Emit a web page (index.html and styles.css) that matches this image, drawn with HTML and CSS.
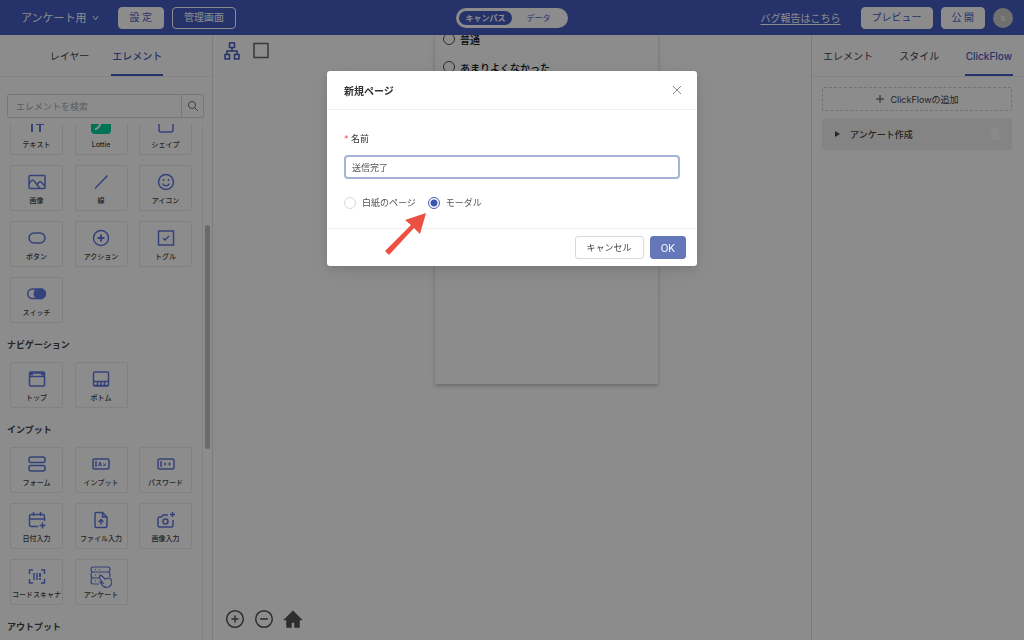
FILE: index.html
```html
<!DOCTYPE html>
<html lang="ja">
<head>
    <meta charset="UTF-8">
    <meta name="viewport" content="width=device-width, initial-scale=1.0">
    <title>アンケート用</title>
    <link rel="stylesheet" href="styles.css">
</head>
<body>

    <!-- Header -->
    <header class="header">
        <div class="header-left">
            <button class="project">アンケート用
                <svg width="7" height="6" viewBox="0 0 7 6"><path d="M1 1l2.500 4L6 1"/></svg>
            </button>
            <button class="btn-head">設 定</button>
            <button class="btn-head outline">管理画面</button>
        </div>
        <div class="switch">
            <button class="active">キャンパス</button>
            <button>データ</button>
        </div>
        <div class="header-right">
            <a class="bug-link" href="#">バグ報告はこちら</a>
            <button class="btn-head narrow">プレビュー</button>
            <button class="btn-head narrow">公 開</button>
            <span class="avatar">s</span>
        </div>
    </header>

    <div class="workspace">

        <!-- Element palette -->
        <aside class="palette">
            <nav class="tabs tabs-left">
                <button>レイヤー</button>
                <button class="active">エレメント</button>
            </nav>
            <form class="search">
                <input type="text" placeholder="エレメントを検索" aria-label="エレメントを検索">
                <button type="button" aria-label="検索">
                    <svg width="12" height="12" viewBox="0 0 12 12"><circle cx="5" cy="5" r="3.500"/><path d="M7.600 7.600L11 11"/></svg>
                </button>
            </form>
            <div class="scroll">
                <div class="scroll-content">
                    <div class="cards">
                        <button class="card"><svg viewBox="0 0 20 20"><path d="M5 7v9M9 8h8M13 8v8" stroke-width="2"/></svg>テキスト</button>
                        <button class="card"><svg viewBox="0 0 20 20"><rect class="lottie" x="0" y="0" width="20" height="18" rx="4"/><path class="lottie-line" d="M4 13c6 0 4-9 10-9"/></svg>Lottie</button>
                        <button class="card"><svg viewBox="0 0 20 20"><rect x="3" y="2" width="14" height="14" rx="2"/></svg>シェイプ</button>
                        <button class="card"><svg viewBox="0 0 20 20"><rect x="2" y="3.500" width="16" height="13" rx="1"/><path d="M2 12c2-4 4-5 6-2l4.500 6M10 13c2-4 4-4 5-2l3 3"/></svg>画像</button>
                        <button class="card"><svg viewBox="0 0 20 20"><path d="M4 16.500L16.500 3.500"/></svg>線</button>
                        <button class="card"><svg viewBox="0 0 20 20"><circle cx="10" cy="10" r="7.500"/><path d="M6.500 11.500c1.500 3 5.500 3 7 0M7.500 7v2M12.500 7v2"/></svg>アイコン</button>
                        <button class="card"><svg viewBox="0 0 20 20"><rect x="2" y="5" width="16" height="10" rx="5"/></svg>ボタン</button>
                        <button class="card"><svg viewBox="0 0 20 20"><circle cx="10" cy="10" r="7.500"/><path d="M10 6.500v7M6.500 10h7" stroke-width="2"/></svg>アクション</button>
                        <button class="card"><svg viewBox="0 0 20 20"><rect x="2.500" y="3" width="15" height="14"/><path d="M7 10l2 2 4-4"/></svg>トグル</button>
                        <button class="card"><svg viewBox="0 0 20 20"><path d="M12 5H5.500a4.500 4.500 0 0 0 0 9.500H12M9 5.500c-2 2.500-2 6 0 8.500"/><circle class="fill" cx="13.500" cy="9.700" r="5"/></svg>スイッチ</button>
                    </div>
                    <h2>ナビゲーション</h2>
                    <div class="cards">
                        <button class="card"><svg viewBox="0 0 20 20"><rect x="2.500" y="3" width="15" height="14" rx="1"/><path d="M3 4h14M3 5.500h3M14 5.500h3M2.500 7.500h15"/></svg>トップ</button>
                        <button class="card"><svg viewBox="0 0 20 20"><rect x="2.500" y="3" width="15" height="14" rx="1"/><path d="M2.500 12.500h15M6.500 16v-3M10 16v-3M13.500 16v-3M3 16.500h14"/></svg>ボトム</button>
                    </div>
                    <h2>インプット</h2>
                    <div class="cards">
                        <button class="card"><svg viewBox="0 0 20 20"><rect x="2" y="3" width="16" height="5.500" rx="2"/><rect x="2" y="11.500" width="16" height="5.500" rx="2"/></svg>フォーム</button>
                        <button class="card"><svg viewBox="0 0 20 20"><rect x="2" y="5" width="16" height="10" rx="1.500"/><path d="M5 7v6"/><path d="M7.500 12L9 8l1.500 4M8 11h2M12.500 9.500l2 2.500M14.500 9.500l-2 2.500" stroke-width="1"/></svg>インプット</button>
                        <button class="card"><svg viewBox="0 0 20 20"><rect x="2" y="5" width="16" height="10" rx="1.500"/><path d="M5 7v6"/><path d="M7.500 10h3M9 8.500v3M12 10h3M13.500 8.500v3" stroke-width="1"/></svg>パスワード</button>
                        <button class="card"><svg viewBox="0 0 20 20"><path d="M11 16.500H4.500q-2 0-2-2v-8q0-2 2-2h11q2 0 2 2V11M2.500 9h15M6.500 2v4M13.500 2v4M15.500 12.500v6M12.500 15.500h6"/></svg>日付入力</button>
                        <button class="card"><svg viewBox="0 0 20 20"><path d="M11.500 2.500h-6q-1.500 0-1.500 1.500v12q0 1.500 1.500 1.500h9q1.500 0 1.500-1.500V7zM11.500 3v4H16M10 14.500V9.500M7.500 12L10 9.500l2.500 2.500"/></svg>ファイル入力</button>
                        <button class="card"><svg viewBox="0 0 20 20"><path d="M12 5H7L5.500 7H3.500Q2 7 2 8.500v7Q2 17 3.500 17h12q1.500 0 1.500-1.500V10M16.500 2v5M14 4.500h5"/><circle cx="9.500" cy="11.500" r="2.500"/></svg>画像入力</button>
                        <button class="card"><svg viewBox="0 0 20 20"><path d="M6 4H2.500v4M14 4h3.500v4M6 17H2.500v-4M14 17h3.500v-4M7 7v7M10 7v7"/><path d="M13 7v4M13 12v2" stroke-width="2"/></svg>コードスキャナ</button>
                        <button class="card"><svg class="large" viewBox="0 0 22 22"><path d="M3 1h15q2 0 2 2.500T18 6H3Q1 6 1 3.500T3 1zM18 6q2 0 2 3v2M3 6Q1 6 1 9t2 3h7M3 12q-2 0-2 3t2 3h6M5 3.500h1M9 3.500h1M5 9h1M9 9h1M5 15h1"/><path d="M10 10q1-1 2 0l3 3 3-1q3 0 4 3 0 4-3 6-4 1-6-1l-3-4 3 1-3-4q-1-2 0-3z"/></svg>アンケート</button>
                    </div>
                    <h2>アウトプット</h2>
                </div>
                <span class="scroll-thumb"></span>
            </div>
        </aside>

        <!-- Canvas -->
        <main class="canvas">
            <div class="tools">
                <button class="tree" aria-label="ページ構成">
                    <svg width="18" height="20" viewBox="0 0 18 20"><path d="M6.500 2h5v4.500h-5zM2 13.500h4.500V18H2zM11.500 13.500H16V18h-4.500zM9 7v3M4 13.500V10h10v3.500"/></svg>
                </button>
                <button aria-label="ページ">
                    <svg width="18" height="20" viewBox="0 0 18 20"><path d="M2 2.500h14v14H2z"/></svg>
                </button>
            </div>
            <div class="stage">
                <div class="screen">
                    <label class="option"><input type="radio" name="rating">普通</label>
                    <label class="option"><input type="radio" name="rating">あまりよくなかった</label>
                </div>
            </div>
            <div class="zoom">
                <button aria-label="拡大">
                    <svg width="20" height="20" viewBox="0 0 20 20"><circle cx="10" cy="10" r="8.300"/><path d="M10 6.500v7M6.500 10h7"/></svg>
                </button>
                <button aria-label="縮小">
                    <svg width="20" height="20" viewBox="0 0 20 20"><circle cx="10" cy="10" r="8.300"/><path d="M6 10h8"/></svg>
                </button>
                <button aria-label="ホーム">
                    <svg width="20" height="20" viewBox="0 0 20 20"><path class="home" d="M10 2.500L2 10.500h2V18h4v-5h4v5h4v-7.500h2z"/></svg>
                </button>
            </div>
        </main>

        <!-- ClickFlow panel -->
        <aside class="inspector">
            <nav class="tabs tabs-right">
                <button>エレメント</button>
                <button>スタイル</button>
                <button class="active">ClickFlow</button>
            </nav>
            <div class="flows">
                <button class="add-flow">
                    <svg width="10" height="10" viewBox="0 0 10 10"><path d="M5 1v8M1 5h8"/></svg>
                    ClickFlowの追加
                </button>
                <div class="flow">
                    <svg width="5" height="6" viewBox="0 0 5 6"><path d="M0 0l5 3-5 3z"/></svg>
                    <span>アンケート作成</span>
                    <button aria-label="削除">
                        <svg width="10" height="12" viewBox="0 0 10 12"><path d="M0 1h3V0h4v1h3v2H0zM1 3h8v9H1z"/></svg>
                    </button>
                </div>
            </div>
        </aside>
    </div>

    <!-- New page modal -->
    <div class="mask">
        <form class="modal" role="dialog" aria-labelledby="modal-title">
            <div class="modal-header">
                <h1 id="modal-title">新規ページ</h1>
                <button type="button" class="close" aria-label="閉じる">
                    <svg width="10" height="10" viewBox="0 0 10 10"><path d="M1 1l8 8M9 1L1 9"/></svg>
                </button>
            </div>
            <div class="modal-body">
                <label class="field-label" for="page-name"><span>*</span> 名前</label>
                <input class="field" id="page-name" type="text" value="送信完了">
                <div class="radios">
                    <label><input type="radio" name="page-type">白紙のページ</label>
                    <label><input type="radio" name="page-type" checked>モーダル</label>
                </div>
            </div>
            <div class="modal-footer">
                <button type="button" class="btn">キャンセル</button>
                <button type="button" class="btn primary">OK</button>
            </div>
            <svg class="arrow" width="42" height="44" viewBox="0 0 42 44"><path d="M41 1l-6 21-6-6L4 43 0 39l26-26-6-5z"/></svg>
        </form>
    </div>

</body>
</html>
```
FILE: styles.css
```css
* {
    box-sizing: border-box;
}

body {
    margin: 0;
    height: 100vh;
    display: flex;
    flex-direction: column;
    overflow: hidden;
    background: #fff;
    color: #444;
    font-family: Inter, "Noto Sans CJK JP", sans-serif;
    font-size: 9px;
}

button,
input {
    margin: 0;
    padding: 0;
    border: 0;
    background: none;
    color: inherit;
    font: inherit;
}

button {
    white-space: nowrap;
}

svg {
    display: block;
    flex: none;
    fill: none;
    stroke: currentColor;
}

h1,
h2 {
    margin: 0;
}

/* Header */
.header {
    flex: none;
    height: 35px;
    display: grid;
    grid-template-columns: 1fr auto 1fr;
    align-items: center;
    padding: 0 11px;
    background: #465cc2;
    color: #fff;
}

.header-left,
.header-right {
    display: flex;
    align-items: center;
    gap: 8px;
}

.header-left {
    padding-left: 10px;
}

.header-right {
    justify-content: flex-end;
}

.project {
    display: flex;
    align-items: center;
    gap: 5px;
    margin-right: 11px;
    font-size: 11px;
    line-height: 14px;
}

.btn-head {
    height: 22px;
    padding: 0 11px;
    border: 1px solid #fff;
    border-radius: 4px;
    background: #fff;
    color: #465cc2;
    font-family: "Liberation Serif", "Noto Sans CJK JP", serif;
    font-size: 10px;
    line-height: 18px;
}

.btn-head.narrow {
    padding: 0 10px;
}

.btn-head.outline {
    background: none;
    color: #fff;
}

.switch {
    display: flex;
    width: 112px;
    height: 20px;
    padding: 3px;
    border-radius: 10px;
    background: #fff;
    color: #465cc2;
    font-size: 8px;
}

.switch button {
    flex: 1;
    border-radius: 8px;
}

.switch .active {
    background: #465cc2;
    color: #fff;
    font-weight: bold;
}

.bug-link {
    margin-right: 12px;
    color: #fff;
    font-size: 10px;
    text-underline-offset: 2px;
}

.avatar {
    width: 20px;
    height: 20px;
    border-radius: 50%;
    background: #ccc;
    line-height: 20px;
    text-align: center;
    color: #fff;
}

/* Columns */
.workspace {
    flex: 1;
    min-height: 0;
    display: grid;
    grid-template-columns: 213px 1fr 213px;
}

.tabs {
    flex: none;
    display: flex;
    height: 42px;
    border-bottom: 1px solid #f0f0f0;
    font-size: 10px;
}

.tabs button {
    height: 41px;
    padding: 2px 1px 0;
    border-bottom: 2px solid transparent;
}

.tabs .active {
    border-color: #465cc2;
    color: #465cc2;
    font-weight: 500;
}

.tabs-left {
    justify-content: center;
    gap: 21px;
}

.tabs-right {
    justify-content: space-between;
    padding: 0 11px 0 10px;
}

/* Element palette */
.palette {
    display: flex;
    flex-direction: column;
    min-height: 0;
    border-right: 1px solid #e6e6e6;
}

.search {
    flex: none;
    display: flex;
    height: 24px;
    margin: 17px 8px 6px 7px;
    border: 1px solid #d9d9d9;
    border-radius: 2px;
}

.search input {
    flex: 1;
    min-width: 0;
    padding: 0 8px;
}

.search input::placeholder {
    color: #aaa;
}

.search button {
    display: grid;
    place-items: center;
    width: 22px;
    border-left: 1px solid #d9d9d9;
    color: #777;
}

.scroll {
    position: relative;
    flex: 1;
    min-height: 0;
    overflow: hidden;
}

.scroll-content {
    width: 203px;
    margin-top: -15px;
    border-right: 1px solid #efefef;
}

.scroll-thumb {
    position: absolute;
    top: 101px;
    right: 2px;
    width: 5px;
    height: 224px;
    border-radius: 3px;
    background: #c1c1c1;
}

.scroll h2 {
    padding: 13px 7px 8px;
    font-size: 9px;
    line-height: 18px;
}

.cards {
    display: grid;
    grid-template-columns: repeat(3, 53px);
    justify-content: space-between;
    gap: 10px;
    padding: 0 10px;
}

.card {
    display: flex;
    flex-direction: column;
    align-items: center;
    height: 46px;
    padding-top: 6px;
    border: 1px solid #ebebeb;
    border-radius: 2px;
    font-size: 7px;
    font-weight: 500;
    line-height: 12px;
}

.card svg {
    width: 20px;
    height: 20px;
    margin-bottom: 3px;
    stroke: #6079e0;
    stroke-width: 1.5;
}

.card .fill {
    fill: #6079e0;
}

.card .lottie {
    fill: #00d09c;
    stroke: none;
}

.card .lottie-line {
    stroke: #fff;
    stroke-width: 2;
}

.card .large {
    width: 22px;
    height: 22px;
    margin-bottom: 1px;
    stroke-width: 1.2;
}

/* Canvas */
.canvas {
    position: relative;
    display: flex;
}

.tools {
    display: flex;
    align-items: flex-start;
    gap: 11px;
    width: 69px;
    padding: 6px 0 0 10px;
    color: #666;
}

.tools svg {
    stroke-width: 1.5;
}

.tools .tree {
    color: #465cc2;
}

.stage {
    flex: 1;
    display: flex;
    justify-content: center;
    align-items: flex-start;
}

.screen {
    width: 223px;
    height: 349px;
    padding: 0 8px;
    overflow: hidden;
    box-shadow: 0 2px 4px rgba(0, 0, 0, 0.25);
}

.option {
    display: flex;
    align-items: center;
    gap: 5px;
    height: 28px;
    color: #111;
    font-size: 10px;
    font-weight: 500;
}

.option:first-child {
    height: 18px;
    margin-top: -5px;
    margin-bottom: 5px;
}

.option input {
    appearance: none;
    width: 12px;
    height: 12px;
    border: 1px solid #555;
    border-radius: 50%;
}

.zoom {
    position: absolute;
    bottom: 11px;
    left: 12px;
    display: flex;
    gap: 9px;
    color: #555;
}

.zoom svg {
    stroke-width: 1.5;
}

.zoom .home {
    fill: #555;
}

/* ClickFlow panel */
.inspector {
    border-left: 1px solid #e0e0e0;
}

.flows {
    display: flex;
    flex-direction: column;
    gap: 7px;
    padding: 10px 12px 10px 10px;
}

.add-flow {
    display: flex;
    align-items: center;
    justify-content: center;
    gap: 5px;
    height: 24px;
    border: 1px dashed #d0d0d0;
    border-radius: 2px;
}

.flow {
    display: flex;
    align-items: center;
    gap: 10px;
    height: 32px;
    padding: 0 12px 0 13px;
    border-radius: 4px;
    background: #f0f0f0;
    font-weight: 500;
}

.flow svg {
    fill: currentColor;
    stroke: none;
}

.flow button {
    margin-left: auto;
    color: #fafafa;
}

/* Modal */
.mask {
    position: fixed;
    inset: 0;
    display: flex;
    align-items: flex-start;
    justify-content: center;
    padding-top: 71px;
    background: rgba(0, 0, 0, 0.45);
}

.modal {
    position: relative;
    width: 370px;
    border-radius: 3px;
    background: #fff;
    box-shadow: 0 3px 8px rgba(0, 0, 0, 0.1), 0 6px 28px rgba(0, 0, 0, 0.08);
}

.modal-header {
    display: flex;
    align-items: center;
    justify-content: space-between;
    height: 39px;
    padding: 0 15px 0 17px;
    border-bottom: 1px solid #f0f0f0;
}

.modal-header h1 {
    color: #333;
    font-size: 10px;
    font-weight: 600;
}

.close {
    color: #888;
}

.modal-body {
    padding: 21px 17px 17px;
}

.field-label {
    display: block;
    color: #333;
    line-height: 16px;
}

.field-label span {
    color: #ff4d4f;
}

.field {
    display: block;
    width: 100%;
    height: 24px;
    margin: 8px 0 16px;
    padding: 0 6px;
    border: 2px solid #a6b2d6;
    border-radius: 4px;
    color: #555;
}

.radios {
    display: flex;
    gap: 12px;
    color: #555;
    line-height: 16px;
}

.radios label {
    display: flex;
    align-items: center;
    gap: 6px;
}

.radios input {
    appearance: none;
    width: 12px;
    height: 12px;
    border: 1px solid #d9d9d9;
    border-radius: 50%;
}

.radios input:checked {
    border-color: #465cb0;
    background: radial-gradient(circle, #3d55ac 3px, #fff 4px);
}

.modal-footer {
    display: flex;
    justify-content: flex-end;
    gap: 6px;
    padding: 7px 11px;
    border-top: 1px solid #f0f0f0;
}

.btn {
    height: 23px;
    padding: 0 11px;
    border: 1px solid #d9d9d9;
    border-radius: 3px;
}

.btn.primary {
    padding: 0 10px;
    border-color: #6478b9;
    background: #6478b9;
    color: #fff;
    font-size: 10px;
}

.arrow {
    position: absolute;
    top: 141px;
    left: 58px;
    fill: #eb5040;
    stroke: none;
}
```
